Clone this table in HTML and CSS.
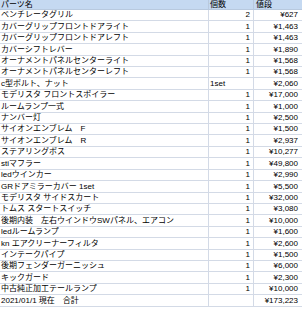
FILE: index.html
```html
<!DOCTYPE html>
<html lang="ja">
<head>
<meta charset="utf-8">
<link rel="stylesheet" href="styles.css">
</head>
<body>
<div class="sheet">
  <div class="row head"><div class="c name">パーツ名</div><div class="c qty left">個数</div><div class="c price left">値段</div></div>
  <div class="row"><div class="c name">ベンチレータグリル</div><div class="c qty">2</div><div class="c price">¥627</div></div>
  <div class="row"><div class="c name">カバーグリップフロントドアライト</div><div class="c qty">1</div><div class="c price">¥1,463</div></div>
  <div class="row"><div class="c name">カバーグリップフロントドアレフト</div><div class="c qty">1</div><div class="c price">¥1,463</div></div>
  <div class="row"><div class="c name">カバーシフトレバー</div><div class="c qty">1</div><div class="c price">¥1,890</div></div>
  <div class="row"><div class="c name">オーナメントパネルセンターライト</div><div class="c qty">1</div><div class="c price">¥1,568</div></div>
  <div class="row"><div class="c name">オーナメントパネルセンターレフト</div><div class="c qty">1</div><div class="c price">¥1,568</div></div>
  <div class="row"><div class="c name">c型ボルト、ナット</div><div class="c qty left">1set</div><div class="c price">¥2,060</div></div>
  <div class="row"><div class="c name">モデリスタ フロントスポイラー</div><div class="c qty">1</div><div class="c price">¥17,000</div></div>
  <div class="row"><div class="c name">ルームランプ一式</div><div class="c qty">1</div><div class="c price">¥1,000</div></div>
  <div class="row"><div class="c name">ナンバー灯</div><div class="c qty">1</div><div class="c price">¥2,500</div></div>
  <div class="row"><div class="c name">サイオンエンブレム　F</div><div class="c qty">1</div><div class="c price">¥1,500</div></div>
  <div class="row"><div class="c name">サイオンエンブレム　R</div><div class="c qty">1</div><div class="c price">¥2,937</div></div>
  <div class="row"><div class="c name">ステアリングボス</div><div class="c qty">1</div><div class="c price">¥10,277</div></div>
  <div class="row"><div class="c name">stiマフラー</div><div class="c qty">1</div><div class="c price">¥49,800</div></div>
  <div class="row"><div class="c name">ledウインカー</div><div class="c qty">1</div><div class="c price">¥2,990</div></div>
  <div class="row"><div class="c name">GRドアミラーカバー 1set</div><div class="c qty">1</div><div class="c price">¥5,500</div></div>
  <div class="row"><div class="c name">モデリスタ サイドスカート</div><div class="c qty">1</div><div class="c price">¥32,000</div></div>
  <div class="row"><div class="c name">トムス スタートスイッチ</div><div class="c qty">1</div><div class="c price">¥3,080</div></div>
  <div class="row"><div class="c name">後期内装　左右ウインドウSWパネル、エアコン</div><div class="c qty">1</div><div class="c price">¥10,000</div></div>
  <div class="row"><div class="c name">ledルームランプ</div><div class="c qty">1</div><div class="c price">¥1,600</div></div>
  <div class="row"><div class="c name">kn エアクリーナーフィルタ</div><div class="c qty">1</div><div class="c price">¥2,600</div></div>
  <div class="row"><div class="c name">インテークパイプ</div><div class="c qty">1</div><div class="c price">¥1,500</div></div>
  <div class="row"><div class="c name">後期フェンダーガーニッシュ</div><div class="c qty">1</div><div class="c price">¥6,000</div></div>
  <div class="row"><div class="c name">キックガード</div><div class="c qty">1</div><div class="c price">¥2,300</div></div>
  <div class="row"><div class="c name">中古純正加工テールランプ</div><div class="c qty">1</div><div class="c price">¥10,000</div></div>
  <div class="row"><div class="c name">2021/01/1 現在　合計</div><div class="c qty"></div><div class="c price">¥173,223</div></div>
</div>
</body>
</html>
```
FILE: styles.css
```css
html, body {
  margin: 0;
  padding: 0;
  background: #ffffff;
}
.sheet {
  width: 302px;
  display: grid;
  grid-template-rows: 10px repeat(26, 11.42px);
  font-family: "Liberation Sans", "Noto Sans CJK JP", sans-serif;
  font-size: 8px;
  color: #000000;
}
.row {
  display: grid;
  grid-template-columns: 209px 45px 48px;
  border-bottom: 1px solid #d3dae6;
  box-sizing: border-box;
}
.head {
  background: #c5d9f1;
  border-bottom-color: #b8c9de;
}
.c {
  display: flex;
  align-items: flex-end;
  line-height: 10px;
  white-space: nowrap;
  box-sizing: border-box;
  overflow: visible;
}
.name {
  padding-left: 1px;
  border-right: 1px solid #d3dae6;
}
.qty {
  justify-content: flex-end;
  padding-right: 3px;
  border-right: 1px solid #d3dae6;
}
.price {
  justify-content: flex-end;
  padding-right: 4px;
}
.qty.left, .price.left {
  justify-content: flex-start;
  padding-left: 1px;
}
.head .c {
  border-right-color: #b8c9de;
}
.head .price {
  padding-left: 2px;
}
```
